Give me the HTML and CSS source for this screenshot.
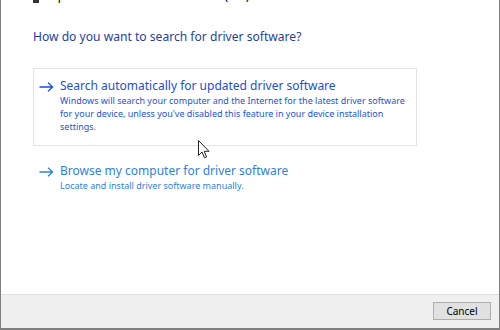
FILE: index.html
```html
<!DOCTYPE html>
<html>
<head>
<meta charset="utf-8">
<link rel="stylesheet" href="styles.css">
</head>
<body>
<div class="window">
  <div class="content">
    <div class="titlebar">
      <span class="dev-icon"></span>
      <span class="title">Update Drivers - Realtek Audio (HD)</span>
    </div>
    <h1 class="heading">How do you want to search for driver software?</h1>
    <div class="option option-hover">
      <svg class="arrow" width="15" height="10" viewBox="0 0 15 10"><path d="M0.5 5H13.5M9 0.8L13.6 5L9 9.2" fill="none" stroke="#1a4fd6" stroke-width="1.3"/></svg>
      <div class="opt-text">
        <div class="opt-title">Search automatically for updated driver software</div>
        <div class="opt-desc">Windows will search your computer and the Internet for the latest driver software for your device, unless you've disabled this feature in your device installation settings.</div>
      </div>
    </div>
    <div class="option option-second">
      <svg class="arrow" width="15" height="10" viewBox="0 0 15 10"><path d="M0.5 5H13.5M9 0.8L13.6 5L9 9.2" fill="none" stroke="#2f7fdc" stroke-width="1.3"/></svg>
      <div class="opt-text">
        <div class="opt-title light">Browse my computer for driver software</div>
        <div class="opt-desc light">Locate and install driver software manually.</div>
      </div>
    </div>
    <svg class="cursor" width="12" height="19" viewBox="0 0 12 19"><path d="M0.5 0.5V15.5L4 12L6.5 17.8L8.6 16.9L6.2 11.3H11Z" fill="#fff" stroke="#222" stroke-width="1"/></svg>
  </div>
  <div class="footer">
    <button class="btn">Cancel</button>
  </div>
</div>
</body>
</html>
```

FILE: styles.css
```css
* { box-sizing: border-box; }
html, body { margin: 0; padding: 0; background: #fff; }
body { font-family: "Noto Sans", "Open Sans", sans-serif; }
.window {
  width: 500px;
  height: 330px;
  border-left: 1px solid #7f7f7f;
  border-right: 1px solid #7f7f7f;
  border-bottom: 2px solid #7f7f7f;
  display: flex;
  flex-direction: column;
  overflow: hidden;
}
.content {
  flex: 1;
  position: relative;
  padding-left: 32px;
}
.titlebar {
  height: 4px;
  display: flex;
  align-items: flex-end;
  overflow: hidden;
}
.dev-icon {
  width: 6px;
  height: 3px;
  background: #333;
  margin-right: 10px;
  align-self: flex-start;
}
.title {
  font-size: 12px;
  color: #000;
  line-height: 14px;
  margin-bottom: 1px;
  white-space: nowrap;
}
.heading {
  margin: 24px 0 0 0;
  font-weight: normal;
  font-size: 12.1px;
  line-height: 17px;
  color: #1f3f9c;
}
.option {
  width: 384px;
  display: flex;
  align-items: flex-start;
  padding: 9px 2px 12px 5px;
  border: 1px solid transparent;
}
.option-hover {
  margin-top: 23px;
  border-color: #e3e3e3;
}
.option-second { margin-top: 7px; }
.arrow { margin-top: 4px; margin-right: 6px; flex: none; }
.opt-title {
  font-size: 12px;
  line-height: 16px;
  color: #1a4fd6;
  white-space: nowrap;
}
.opt-desc {
  font-size: 9px;
  line-height: 13px;
  color: #1d54d4;
}
.light { color: #2f7fdc; }
.cursor {
  position: absolute;
  left: 197px;
  top: 140px;
}
.footer {
  height: 34px;
  background: #f0f0f0;
  border-top: 1px solid #dfdfdf;
  display: flex;
  justify-content: flex-end;
  align-items: flex-start;
  padding: 7px 8px 0 0;
}
.btn {
  width: 58px;
  height: 18px;
  background: #e1e1e1;
  border: 1px solid #adadad;
  font-family: "Noto Sans", sans-serif;
  font-size: 10px;
  color: #000;
  padding: 0;
  line-height: 16px;
}
```
